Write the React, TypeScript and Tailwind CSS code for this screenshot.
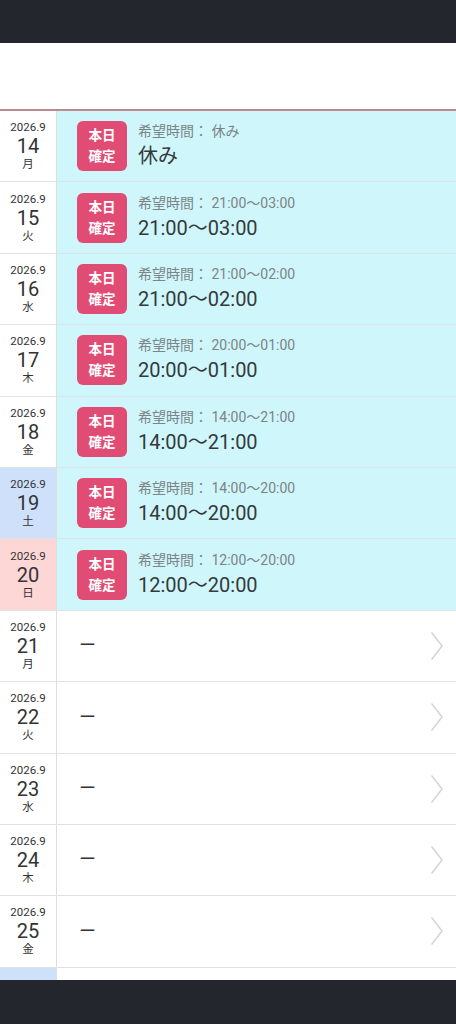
type Day = {
  day: number;
  wd: string;
  kind?: "sat" | "sun";
  time?: string;
};

const days: Day[] = [
  { day: 14, wd: "月", time: "休み" },
  { day: 15, wd: "火", time: "21:00〜03:00" },
  { day: 16, wd: "水", time: "21:00〜02:00" },
  { day: 17, wd: "木", time: "20:00〜01:00" },
  { day: 18, wd: "金", time: "14:00〜21:00" },
  { day: 19, wd: "土", kind: "sat", time: "14:00〜20:00" },
  { day: 20, wd: "日", kind: "sun", time: "12:00〜20:00" },
  { day: 21, wd: "月" },
  { day: 22, wd: "火" },
  { day: 23, wd: "水" },
  { day: 24, wd: "木" },
  { day: 25, wd: "金" },
  { day: 26, wd: "土", kind: "sat" },
];

function Chevron() {
  return (
    <svg width="14" height="30" viewBox="0 0 14 30" fill="none">
      <polyline
        points="2,2 12,15 2,28"
        stroke="#d6d6d6"
        strokeWidth="1.6"
        strokeLinecap="round"
        strokeLinejoin="round"
      />
    </svg>
  );
}

function Row({ d }: { d: Day }) {
  const cellBg =
    d.kind === "sat" ? "bg-[#cfe0fb]" : d.kind === "sun" ? "bg-[#fdd6d6]" : "bg-white";
  return (
    <div className="flex h-[71.4px] shrink-0 border-b border-[#dfe3e5]">
      <div
        className={`w-[57px] shrink-0 flex flex-col items-center justify-center border-r border-[#dcdfe2] text-[#333] ${cellBg}`}
      >
        <span className="text-[11.5px] leading-[15px]">2026.9</span>
        <span className="text-[20px] leading-[22px]">{d.day}</span>
        <span className="text-[11.5px] leading-[15px]">{d.wd}</span>
      </div>
      {d.time ? (
        <div className="flex-1 flex items-center bg-[#cff6fb] pl-[20px]">
          <div className="w-[50px] h-[50px] rounded-[6px] bg-[#e14c74] flex flex-col items-center justify-center text-white font-bold text-[13.5px] leading-[21px]">
            <span>本日</span>
            <span>確定</span>
          </div>
          <div className="ml-[11px] flex flex-col">
            <span className="text-[14px] leading-[20px] text-[#7c8486]">
              希望時間： {d.time}
            </span>
            <span className="text-[20px] leading-[30px] text-[#333a3c]">{d.time}</span>
          </div>
        </div>
      ) : (
        <div className="flex-1 flex items-center bg-white pl-[22px] pr-[12px]">
          <span className="flex-1 text-[17px] text-[#333]">ー</span>
          <Chevron />
        </div>
      )}
    </div>
  );
}

export default function App() {
  return (
    <div
      className="w-[456px] h-[1024px] flex flex-col overflow-hidden bg-white"
      style={{ fontFamily: 'Roboto, "Noto Sans CJK JP", sans-serif' }}
    >
      <div className="h-[43px] shrink-0 bg-[#24262d]" />
      <div className="h-[66px] shrink-0 bg-white" />
      <div className="h-[2px] shrink-0 bg-[#b98a90]" />
      <div className="flex-1 flex flex-col overflow-hidden">
        {days.map((d) => (
          <Row key={d.day} d={d} />
        ))}
      </div>
      <div className="h-[44px] shrink-0 bg-[#24262d]" />
    </div>
  );
}
